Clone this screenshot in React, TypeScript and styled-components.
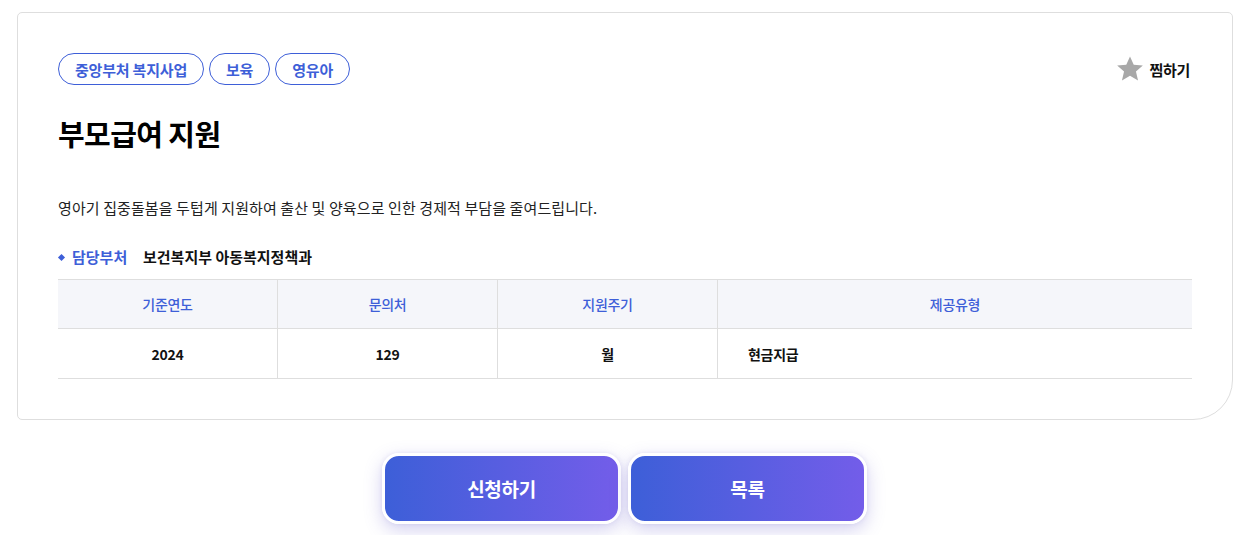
import React from "react";
import styled, { createGlobalStyle } from "styled-components";

const Global = createGlobalStyle`
  html, body { margin: 0; padding: 0; background: #ffffff; }
  body { font-family: "Noto Sans CJK KR", "Noto Sans", sans-serif; color: #111; }
  * { box-sizing: border-box; }
`;

const Page = styled.div`
  padding: 12px 18px 14px 17px;
  display: flex;
  flex-direction: column;
  align-items: stretch;
`;

const Card = styled.section`
  border: 1px solid #dedede;
  border-radius: 5px 5px 40px 5px;
  padding: 40px 40px 40px 40px;
  background: #fff;
  display: flex;
  flex-direction: column;
`;

const TopRow = styled.div`
  display: flex;
  justify-content: space-between;
  align-items: center;
`;

const Chips = styled.div`
  display: flex;
  gap: 5px;
`;

const Chip = styled.span`
  height: 32px;
  padding: 0 16px;
  border: 1px solid #3e5fd8;
  border-radius: 16px;
  color: #3e5fd8;
  font-size: 15px;
  font-weight: 700;
  display: inline-flex;
  align-items: center;
  letter-spacing: -0.2px;
`;

const Fav = styled.button`
  border: 0;
  background: none;
  padding: 0;
  display: flex;
  align-items: center;
  gap: 5px;
  font-family: inherit;
  font-size: 15px;
  font-weight: 700;
  color: #111;
  margin-right: 2px;
  letter-spacing: -0.3px;
`;

const Title = styled.h1`
  margin: 28px 0 0 0;
  font-size: 29px;
  font-weight: 700;
  line-height: 40px;
  letter-spacing: -0.6px;
  color: #000;
`;

const Desc = styled.p`
  margin: 44px 0 0 0;
  font-size: 15px;
  line-height: 22px;
  color: #222;
  letter-spacing: 0.1px;
`;

const Dept = styled.div`
  margin-top: 27px;
  display: flex;
  align-items: center;
  font-size: 15px;
  font-weight: 700;
  line-height: 22px;
  letter-spacing: 0;
`;

const DeptLabel = styled.span`
  color: #3e5fd8;
  display: inline-flex;
  align-items: center;
  gap: 8px;
  width: 85px;
  &::before {
    content: "";
    width: 5px;
    height: 5px;
    background: #3e5fd8;
    transform: rotate(45deg);
    margin-left: 1px;
  }
`;

const DeptValue = styled.span`
  color: #111;
`;

const Table = styled.div`
  margin-top: 11px;
  border-top: 1px solid #dedede;
  display: grid;
  grid-template-columns: 219px 220px 220px 1fr;
`;

const HeadCell = styled.div<{ $first?: boolean }>`
  height: 49px;
  background: #f5f6fa;
  border-bottom: 1px solid #dedede;
  border-left: ${(p) => (p.$first ? "0" : "1px solid #dedede")};
  display: flex;
  align-items: center;
  justify-content: center;
  color: #3e5fd8;
  font-size: 14px;
  font-weight: 500;
  letter-spacing: -0.3px;
`;

const BodyCell = styled.div<{ $first?: boolean; $left?: boolean }>`
  height: 50px;
  border-bottom: 1px solid #dedede;
  border-left: ${(p) => (p.$first ? "0" : "1px solid #dedede")};
  display: flex;
  align-items: center;
  justify-content: ${(p) => (p.$left ? "flex-start" : "center")};
  padding-left: ${(p) => (p.$left ? "30px" : "0")};
  color: #111;
  font-size: 14px;
  font-weight: 700;
  letter-spacing: -0.3px;
`;

const Actions = styled.div`
  margin-top: 33px;
  display: flex;
  justify-content: center;
  gap: 7px;
  padding-right: 1px;
`;

const ActionButton = styled.button`
  width: 239px;
  height: 71px;
  border: 3px solid #fff;
  border-radius: 17px;
  background: linear-gradient(90deg, #3d5fd8 0%, #735de9 100%);
  color: #fff;
  font-family: inherit;
  font-size: 19px;
  font-weight: 700;
  letter-spacing: -0.3px;
  box-shadow: 0 6px 18px rgba(100, 90, 200, 0.28), 0 0 4px rgba(100, 90, 200, 0.12);
  cursor: pointer;
`;

const Star = () => (
  <svg width="28" height="28" viewBox="0 0 24 24" aria-hidden="true">
    <path
      d="M12 1.2l3.2 7.2 7.8.7-5.9 5.1 1.8 7.7L12 17.8l-6.9 4.1 1.8-7.7-5.9-5.1 7.8-.7z"
      fill="#a8a8a8"
    />
  </svg>
);

export default function App() {
  const heads = ["기준연도", "문의처", "지원주기", "제공유형"];
  return (
    <>
      <Global />
      <Page>
        <Card>
          <TopRow>
            <Chips>
              <Chip>중앙부처 복지사업</Chip>
              <Chip>보육</Chip>
              <Chip>영유아</Chip>
            </Chips>
            <Fav>
              <Star />
              찜하기
            </Fav>
          </TopRow>
          <Title>부모급여 지원</Title>
          <Desc>영아기 집중돌봄을 두텁게 지원하여 출산 및 양육으로 인한 경제적 부담을 줄여드립니다.</Desc>
          <Dept>
            <DeptLabel>담당부처</DeptLabel>
            <DeptValue>보건복지부 아동복지정책과</DeptValue>
          </Dept>
          <Table>
            {heads.map((h, i) => (
              <HeadCell key={h} $first={i === 0}>
                {h}
              </HeadCell>
            ))}
            <BodyCell $first>2024</BodyCell>
            <BodyCell>129</BodyCell>
            <BodyCell>월</BodyCell>
            <BodyCell $left>현금지급</BodyCell>
          </Table>
        </Card>
        <Actions>
          <ActionButton>신청하기</ActionButton>
          <ActionButton>목록</ActionButton>
        </Actions>
      </Page>
    </>
  );
}
